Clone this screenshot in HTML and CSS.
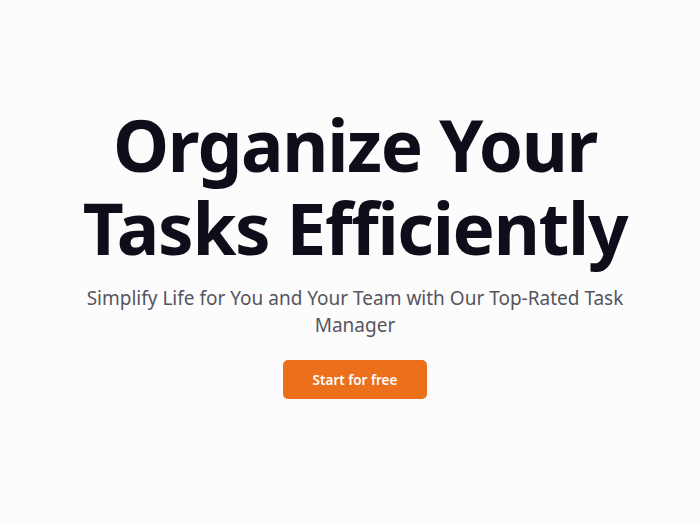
FILE: index.html
```html
<!DOCTYPE html>
<html lang="en">
<head>
<meta charset="utf-8">
<title>Organize Your Tasks Efficiently</title>
<link rel="stylesheet" href="styles.css">
</head>
<body>
<main class="hero">
  <h1 class="hero-title">Organize Your<br>Tasks Efficiently</h1>
  <p class="hero-sub">Simplify Life for You and Your Team with Our Top-Rated Task Manager</p>
  <a class="hero-btn" href="#">Start for free</a>
</main>
</body>
</html>
```
FILE: styles.css
```css
html, body {
  margin: 0;
  padding: 0;
  background: #fdfcfd;
}
body {
  font-family: "Noto Sans", "Open Sans", sans-serif;
  width: 700px;
  height: 525px;
  overflow: hidden;
}
.hero {
  display: flex;
  flex-direction: column;
  align-items: center;
  text-align: center;
  padding-top: 103px;
  padding-left: 10px;
}
.hero-title {
  margin: 0;
  font-size: 71px;
  line-height: 83px;
  font-weight: 700;
  color: #0e0e1a;
  letter-spacing: -1.3px;
}
.hero-sub {
  margin: 16px 0 0;
  width: 560px;
  font-size: 19px;
  line-height: 27px;
  color: #55555e;
}
.hero-btn {
  margin-top: 21px;
  display: flex;
  align-items: center;
  justify-content: center;
  width: 144px;
  height: 39px;
  border-radius: 5px;
  background: #ec6f1c;
  color: #fff;
  font-size: 13.5px;
  font-weight: 600;
  text-decoration: none;
}
```
